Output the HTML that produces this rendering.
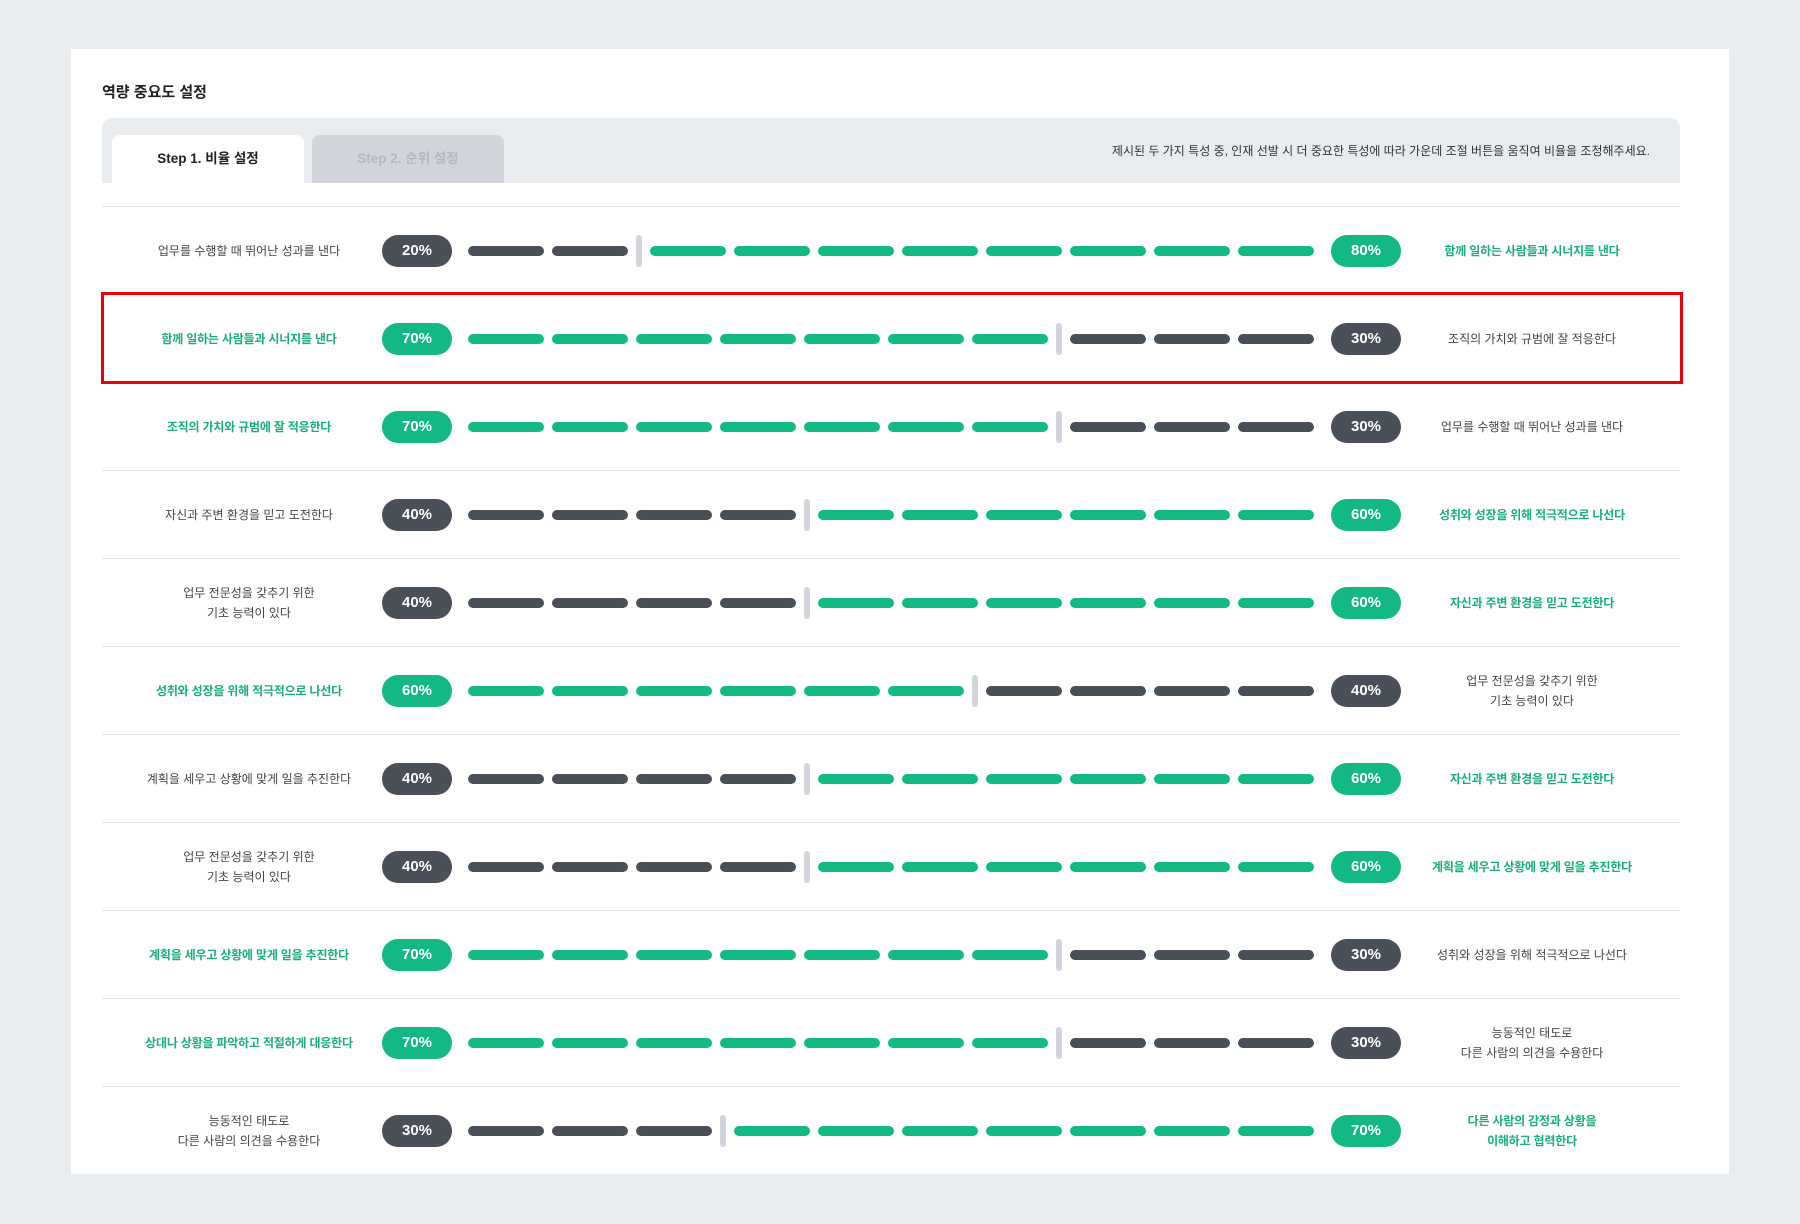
<!DOCTYPE html>
<html><head><meta charset="utf-8"><style>
*{margin:0;padding:0;box-sizing:border-box}
body{width:1800px;height:1224px;background:#e9ecef;font-family:"Liberation Sans","Noto Sans CJK KR",sans-serif;position:relative;overflow:hidden}
.card{position:absolute;left:71px;top:49px;width:1658px;height:1125px;background:#fff}
.title{position:absolute;left:102px;top:81px;font-size:15px;font-weight:bold;color:#222}
.tabbar{position:absolute;left:102px;top:118px;width:1578px;height:65px;background:#e9ecef;border-radius:10px 10px 0 0}
.tab{position:absolute;top:135px;height:48px;width:192px;border-radius:8px 8px 0 0;font-size:13.5px;font-weight:bold;text-align:center;line-height:48px}
.t1{left:112px;background:#fff;color:#222}
.t2{left:312px;background:#d1d5db;color:#b3b8bf}
.inst{position:absolute;right:150px;top:142px;font-size:12px;color:#333}
.topline{position:absolute;left:102px;top:206px;width:1578px;height:1px;background:#e2e4e7}
.row{position:absolute;left:102px;width:1578px;height:88px;border-bottom:1px solid #e2e4e7}
.lab{position:absolute;top:0;height:87px;width:260px;display:flex;align-items:center;justify-content:center;text-align:center;font-size:12px;line-height:20px;color:#444}
.lab.g{color:#1aae7c;font-weight:bold;letter-spacing:-0.2px}
.l{left:17px}.r{left:1300px}
.pill{position:absolute;top:28px;width:70px;height:32px;border-radius:16px;color:#fff;font-weight:bold;font-size:15px;text-align:center;line-height:32px}
.pl{left:280px}.pr{left:1229px}
.d{background:#4a5058}.gr{background:#14b885}
.track{position:absolute;left:366px;top:28px;height:32px;display:flex;align-items:center;gap:8px}
.track i{display:block;width:76px;height:10px;border-radius:5px}
.track b{display:block;width:6px;height:32px;border-radius:3px;background:#d1d5db}
.red{position:absolute;left:101px;top:292px;width:1582px;height:92px;border:3px solid #e8000b}
</style></head><body>
<div class="card"></div>
<div class="title">역량 중요도 설정</div>
<div class="tabbar"></div>
<div class="tab t1">Step 1. 비율 설정</div>
<div class="tab t2">Step 2. 순위 설정</div>
<div class="inst">제시된 두 가지 특성 중, 인재 선발 시 더 중요한 특성에 따라 가운데 조절 버튼을 움직여 비율을 조정해주세요.</div>
<div class="topline"></div>

<div class="row" style="top:207px"><div class="lab l">업무를 수행할 때 뛰어난 성과를 낸다</div><div class="pill pl d">20%</div>
<div class="track"><i class="d"></i><i class="d"></i><b></b><i class="gr"></i><i class="gr"></i><i class="gr"></i><i class="gr"></i><i class="gr"></i><i class="gr"></i><i class="gr"></i><i class="gr"></i></div>
<div class="pill pr gr">80%</div><div class="lab r g">함께 일하는 사람들과 시너지를 낸다</div></div>

<div class="row" style="top:295px"><div class="lab l g">함께 일하는 사람들과 시너지를 낸다</div><div class="pill pl gr">70%</div>
<div class="track"><i class="gr"></i><i class="gr"></i><i class="gr"></i><i class="gr"></i><i class="gr"></i><i class="gr"></i><i class="gr"></i><b></b><i class="d"></i><i class="d"></i><i class="d"></i></div>
<div class="pill pr d">30%</div><div class="lab r">조직의 가치와 규범에 잘 적응한다</div></div>

<div class="row" style="top:383px"><div class="lab l g">조직의 가치와 규범에 잘 적응한다</div><div class="pill pl gr">70%</div>
<div class="track"><i class="gr"></i><i class="gr"></i><i class="gr"></i><i class="gr"></i><i class="gr"></i><i class="gr"></i><i class="gr"></i><b></b><i class="d"></i><i class="d"></i><i class="d"></i></div>
<div class="pill pr d">30%</div><div class="lab r">업무를 수행할 때 뛰어난 성과를 낸다</div></div>

<div class="row" style="top:471px"><div class="lab l">자신과 주변 환경을 믿고 도전한다</div><div class="pill pl d">40%</div>
<div class="track"><i class="d"></i><i class="d"></i><i class="d"></i><i class="d"></i><b></b><i class="gr"></i><i class="gr"></i><i class="gr"></i><i class="gr"></i><i class="gr"></i><i class="gr"></i></div>
<div class="pill pr gr">60%</div><div class="lab r g">성취와 성장을 위해 적극적으로 나선다</div></div>

<div class="row" style="top:559px"><div class="lab l">업무 전문성을 갖추기 위한<br>기초 능력이 있다</div><div class="pill pl d">40%</div>
<div class="track"><i class="d"></i><i class="d"></i><i class="d"></i><i class="d"></i><b></b><i class="gr"></i><i class="gr"></i><i class="gr"></i><i class="gr"></i><i class="gr"></i><i class="gr"></i></div>
<div class="pill pr gr">60%</div><div class="lab r g">자신과 주변 환경을 믿고 도전한다</div></div>

<div class="row" style="top:647px"><div class="lab l g">성취와 성장을 위해 적극적으로 나선다</div><div class="pill pl gr">60%</div>
<div class="track"><i class="gr"></i><i class="gr"></i><i class="gr"></i><i class="gr"></i><i class="gr"></i><i class="gr"></i><b></b><i class="d"></i><i class="d"></i><i class="d"></i><i class="d"></i></div>
<div class="pill pr d">40%</div><div class="lab r">업무 전문성을 갖추기 위한<br>기초 능력이 있다</div></div>

<div class="row" style="top:735px"><div class="lab l">계획을 세우고 상황에 맞게 일을 추진한다</div><div class="pill pl d">40%</div>
<div class="track"><i class="d"></i><i class="d"></i><i class="d"></i><i class="d"></i><b></b><i class="gr"></i><i class="gr"></i><i class="gr"></i><i class="gr"></i><i class="gr"></i><i class="gr"></i></div>
<div class="pill pr gr">60%</div><div class="lab r g">자신과 주변 환경을 믿고 도전한다</div></div>

<div class="row" style="top:823px"><div class="lab l">업무 전문성을 갖추기 위한<br>기초 능력이 있다</div><div class="pill pl d">40%</div>
<div class="track"><i class="d"></i><i class="d"></i><i class="d"></i><i class="d"></i><b></b><i class="gr"></i><i class="gr"></i><i class="gr"></i><i class="gr"></i><i class="gr"></i><i class="gr"></i></div>
<div class="pill pr gr">60%</div><div class="lab r g">계획을 세우고 상황에 맞게 일을 추진한다</div></div>

<div class="row" style="top:911px"><div class="lab l g">계획을 세우고 상황에 맞게 일을 추진한다</div><div class="pill pl gr">70%</div>
<div class="track"><i class="gr"></i><i class="gr"></i><i class="gr"></i><i class="gr"></i><i class="gr"></i><i class="gr"></i><i class="gr"></i><b></b><i class="d"></i><i class="d"></i><i class="d"></i></div>
<div class="pill pr d">30%</div><div class="lab r">성취와 성장을 위해 적극적으로 나선다</div></div>

<div class="row" style="top:999px"><div class="lab l g">상대나 상황을 파악하고 적절하게 대응한다</div><div class="pill pl gr">70%</div>
<div class="track"><i class="gr"></i><i class="gr"></i><i class="gr"></i><i class="gr"></i><i class="gr"></i><i class="gr"></i><i class="gr"></i><b></b><i class="d"></i><i class="d"></i><i class="d"></i></div>
<div class="pill pr d">30%</div><div class="lab r">능동적인 태도로<br>다른 사람의 의견을 수용한다</div></div>

<div class="row" style="top:1087px;border-bottom:none"><div class="lab l">능동적인 태도로<br>다른 사람의 의견을 수용한다</div><div class="pill pl d">30%</div>
<div class="track"><i class="d"></i><i class="d"></i><i class="d"></i><b></b><i class="gr"></i><i class="gr"></i><i class="gr"></i><i class="gr"></i><i class="gr"></i><i class="gr"></i><i class="gr"></i></div>
<div class="pill pr gr">70%</div><div class="lab r g">다른 사람의 감정과 상황을<br>이해하고 협력한다</div></div>

<div class="red"></div>
</body></html>
